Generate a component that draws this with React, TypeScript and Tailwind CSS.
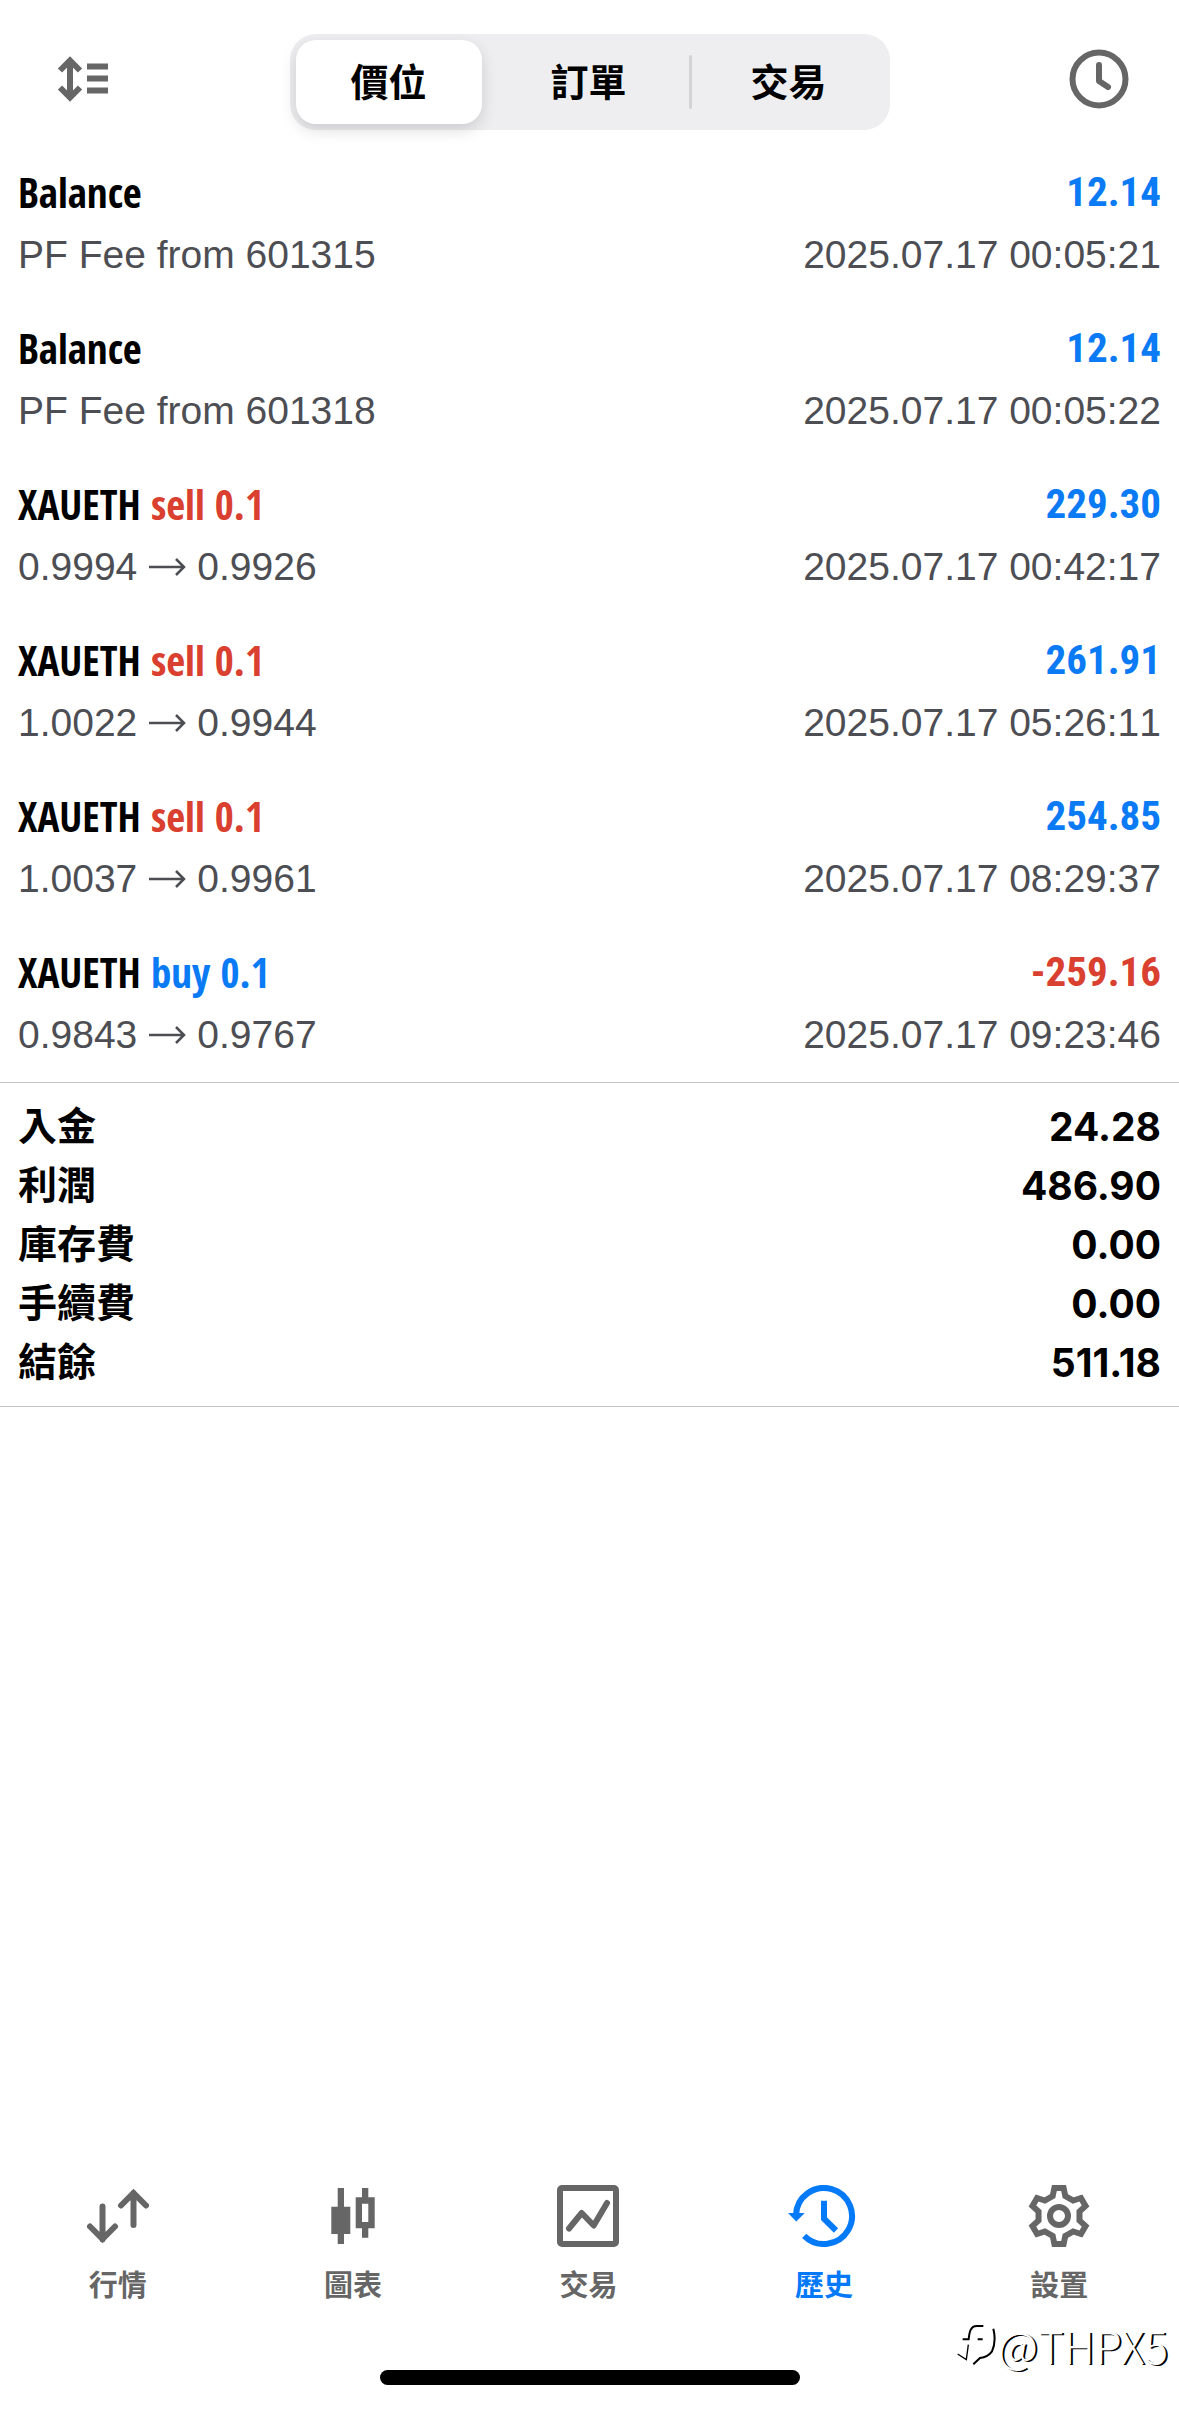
import React, { useState } from 'react';
import clsx from 'clsx';

type Deal = {
  title: string;
  side?: 'buy' | 'sell';
  volume?: string;
  detail?: string;
  open?: string;
  close?: string;
  amount: string;
  time: string;
};

const deals: Deal[] = [
  { title: 'Balance', detail: 'PF Fee from 601315', amount: '12.14', time: '2025.07.17 00:05:21' },
  { title: 'Balance', detail: 'PF Fee from 601318', amount: '12.14', time: '2025.07.17 00:05:22' },
  { title: 'XAUETH', side: 'sell', volume: '0.1', open: '0.9994', close: '0.9926', amount: '229.30', time: '2025.07.17 00:42:17' },
  { title: 'XAUETH', side: 'sell', volume: '0.1', open: '1.0022', close: '0.9944', amount: '261.91', time: '2025.07.17 05:26:11' },
  { title: 'XAUETH', side: 'sell', volume: '0.1', open: '1.0037', close: '0.9961', amount: '254.85', time: '2025.07.17 08:29:37' },
  { title: 'XAUETH', side: 'buy', volume: '0.1', open: '0.9843', close: '0.9767', amount: '-259.16', time: '2025.07.17 09:23:46' },
];

const summary = [
  { label: '入金', value: '24.28' },
  { label: '利潤', value: '486.90' },
  { label: '庫存費', value: '0.00' },
  { label: '手續費', value: '0.00' },
  { label: '結餘', value: '511.18' },
];

const segments = ['價位', '訂單', '交易'];

function SortIcon() {
  return (
    <svg width="52" height="46" viewBox="0 0 52 46" fill="none" stroke="#666" strokeWidth="6">
      <path d="M13 5v36M3 14.500l10-10 10 10M3 31.500l10 10 10-10" />
      <path d="M30 10.500h21M30 22.500h21M30 34.500h21" />
    </svg>
  );
}

function ClockIcon() {
  return (
    <svg width="60" height="60" viewBox="0 0 60 60" fill="none" stroke="#666" strokeWidth="6" strokeLinecap="round" strokeLinejoin="round">
      <circle cx="30" cy="30" r="26.500" />
      <path d="M30 16v16l9 6" />
    </svg>
  );
}

function ArrowIcon() {
  return (
    <svg width="38" height="18" viewBox="0 0 38 18" fill="none" stroke="currentColor" strokeWidth="2.500" role="img" aria-label="至">
      <path d="M1 9h35M28 1l8 8-8 8" />
    </svg>
  );
}

function QuotesIcon() {
  return (
    <svg width="62" height="62" viewBox="0 0 62 62" fill="none" stroke="currentColor" strokeWidth="6" strokeLinecap="round">
      <path d="M15.500 21.500v33M3 41.500l12.500 12.500L28 41.500" />
      <path d="M46.500 40V8M34 20.500L46.500 8 59 20.500" />
    </svg>
  );
}

function ChartIcon() {
  return (
    <svg width="62" height="62" viewBox="0 0 62 62" fill="currentColor">
      <path d="M15.700 3h6.300v18.700h6.300V49h-6.300v10h-6.300V49H9.300V21.700h6.400z" />
      <path fillRule="evenodd" d="M40 3h6.300v9.300h6.400v31h-6.400v9.400H40v-9.400h-6.300v-31H40zM40 18.700V37h6.300V18.700z" />
    </svg>
  );
}

function TradeIcon() {
  return (
    <svg width="62" height="62" viewBox="0 0 62 62" fill="none" stroke="currentColor" strokeWidth="6" strokeLinecap="round" strokeLinejoin="round">
      <rect x="3" y="3" width="56" height="56" rx="2" />
      <path d="M12 43.500L24.700 28l12 12.500L50 18" />
    </svg>
  );
}

function HistoryIcon() {
  return (
    <svg width="72" height="62" viewBox="0 0 72 62" fill="none" stroke="currentColor" strokeWidth="6">
      <path d="M16.200 50.800A28 28 0 1 0 8 30" />
      <path d="M0 28h16.700L8.300 36.500z" fill="currentColor" stroke="none" />
      <path d="M36 15.700v18L48 45.500" />
    </svg>
  );
}

// One tooth of the gear, repeated every 60 degrees around the centre.
const tooth = [[-6.3, -20], [-4.6, -28], [4.6, -28], [6.3, -20]];
const gearPoints = [0, 60, 120, 180, 240, 300]
  .flatMap((deg) => {
    const a = (deg * Math.PI) / 180;
    return tooth.map(([x, y]) =>
      `${(31 + x * Math.cos(a) - y * Math.sin(a)).toFixed(2)},${(31 + x * Math.sin(a) + y * Math.cos(a)).toFixed(2)}`
    );
  })
  .join(' ');

function SettingsIcon() {
  return (
    <svg width="62" height="62" viewBox="0 0 62 62" fill="none" stroke="currentColor" strokeWidth="6">
      <polygon points={gearPoints} />
      <circle cx="31" cy="31" r="9" />
    </svg>
  );
}

function GhostLogo() {
  return (
    <svg width="40" height="43" viewBox="0 0 120 129" fill="none" stroke="#000" strokeWidth="6">
      <path d="M20 46h18C40 24 44 6 62 6h20M65 46h15" />
      <path d="M112 14c6 24 4 50-4 68-10 14-22 18-36 20L52 121" />
      <path d="M37 62L31 107 5 90" strokeWidth="4" />
    </svg>
  );
}

const tabs = [
  { label: '行情', icon: QuotesIcon },
  { label: '圖表', icon: ChartIcon },
  { label: '交易', icon: TradeIcon },
  { label: '歷史', icon: HistoryIcon },
  { label: '設置', icon: SettingsIcon },
];

function Header() {
  const [active, setActive] = useState(0);
  return (
    <header className="grid grid-cols-[1fr_600px_1fr] items-start pt-[34px] pb-4">
      <button type="button" aria-label="排序" className="mt-[22px] ml-[57px] justify-self-start">
        <SortIcon />
      </button>
      <div role="tablist" className="grid h-24 grid-cols-3 rounded-[26px] bg-[#eeeef0]">
        {segments.map((label, i) => (
          <div key={label} className="flex items-center">
            <button
              type="button"
              role="tab"
              aria-selected={active === i}
              onClick={() => setActive(i)}
              className={clsx(
                'mr-2 ml-[6px] h-[84px] flex-1 rounded-[20px] pt-[2px] text-[38px] font-bold text-black',
                active === i && 'bg-white shadow-[0_6px_16px_rgba(0,0,0,0.14)]'
              )}
            >
              {label}
            </button>
            {i === 1 && <span className="-mr-[2px] -ml-px h-[54px] w-[3px] rounded-full bg-[#d3d3d5]" />}
          </div>
        ))}
      </div>
      <button type="button" aria-label="時間" className="mt-[15px] mr-[50px] justify-self-end">
        <ClockIcon />
      </button>
    </header>
  );
}

function DealRow({ deal }: { deal: Deal }) {
  return (
    <li className="flex justify-between px-[18px] pt-[15px] pb-4">
      <div>
        <p className="font-['Open_Sans_Condensed','Open_Sans',sans-serif] text-[41px] leading-[63px] font-bold">
          {deal.title}
          {deal.side && (
            <span className={deal.side === 'buy' ? 'text-[#0a7af5]' : 'text-[#d9402f]'}>
              {' '}{deal.side} {deal.volume}
            </span>
          )}
        </p>
        {deal.detail ? (
          <p className="text-[39px] leading-[62px] text-[#4d4e53]">{deal.detail}</p>
        ) : (
          <p className="flex items-center gap-[11px] text-[39px] leading-[62px] text-[#4d4e53]">
            {deal.open}
            <ArrowIcon />
            {deal.close}
          </p>
        )}
      </div>
      <div className="text-right">
        <p
          className={clsx(
            "font-['Roboto_Condensed','Roboto',sans-serif] text-[41px] leading-[63px] font-bold",
            deal.amount.startsWith('-') ? 'text-[#d9402f]' : 'text-[#0a7af5]'
          )}
        >
          {deal.amount}
        </p>
        <p className="text-[39px] leading-[62px] text-[#4d4e53] [font-kerning:none]">{deal.time}</p>
      </div>
    </li>
  );
}

export default function App() {
  return (
    <div lang="zh-Hant" className="relative flex min-h-screen flex-col bg-white font-['Liberation_Sans','Noto_Sans_CJK_TC',sans-serif] text-black">
      <Header />

      <main className="flex-1">
        <ul>
          {deals.map((deal) => (
            <DealRow key={deal.time} deal={deal} />
          ))}
        </ul>
        <dl className="border-y border-[#c6c6c8] px-[18px] py-[14px]">
          {summary.map((row) => (
            <div key={row.label} className="flex h-[59px] items-center justify-between text-[39px] leading-[59px] font-bold">
              <dt>{row.label}</dt>
              <dd className="font-['Inter',sans-serif]">{row.value}</dd>
            </div>
          ))}
        </dl>
      </main>

      <nav className="grid grid-cols-5 pr-[2px]">
        {tabs.map(({ label, icon: Icon }) => (
          <a
            key={label}
            href="#"
            className={clsx(
              'flex flex-col items-center gap-[17px] text-[29px] leading-[44px] font-bold',
              label === '歷史' ? 'text-[#057af9]' : 'text-[#666]'
            )}
          >
            <Icon />
            {label}
          </a>
        ))}
      </nav>

      <div className="flex justify-center pt-[62px] pb-[24px]">
        <div className="h-[15px] w-[420px] rounded-full bg-black" />
      </div>

      <div className="absolute right-[11px] bottom-[38px] flex items-center gap-[2px]">
        <GhostLogo />
        <span className="font-['Noto_Sans_CJK_TC',sans-serif] text-[44px] leading-[52px] font-light text-white [text-shadow:2px_1px_0_#000]">
          @THPX5
        </span>
      </div>
    </div>
  );
}
